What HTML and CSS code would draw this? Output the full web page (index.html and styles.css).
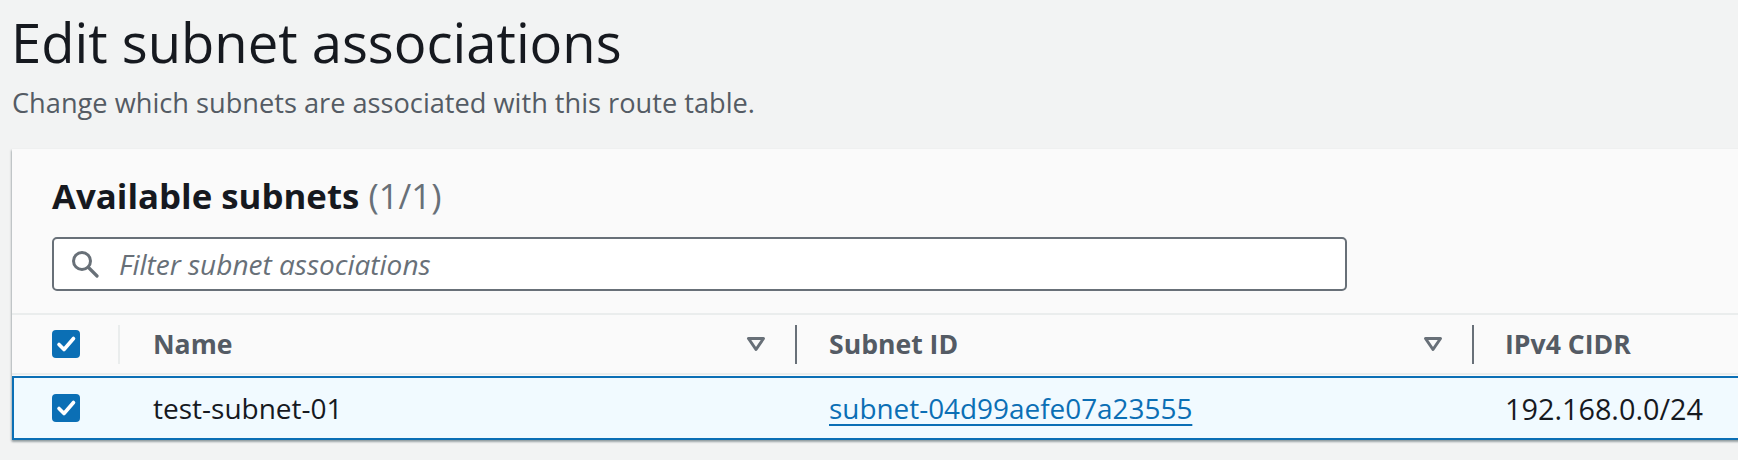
FILE: index.html
```html
<!DOCTYPE html>
<html lang="en">
<head>
<meta charset="utf-8">
<title>Edit subnet associations</title>
<link rel="stylesheet" href="styles.css">
</head>
<body>
<div class="page">
  <header class="page-header">
    <h1 class="title">Edit subnet associations</h1>
    <p class="desc">Change which subnets are associated with this route table.</p>
  </header>

  <section class="panel">
    <div class="panel-head">
      <h2 class="panel-title">Available subnets <span class="count">(1/1)</span></h2>
      <div class="filter">
        <svg class="search-icon" viewBox="0 0 28 28" width="28" height="28" aria-hidden="true">
          <circle cx="11" cy="11" r="8.5" fill="none" stroke="#687078" stroke-width="3"/>
          <line x1="17.5" y1="17.5" x2="26" y2="26" stroke="#687078" stroke-width="3.2" stroke-linecap="round"/>
        </svg>
        <span class="placeholder">Filter subnet associations</span>
      </div>
    </div>

    <div class="table">
      <div class="grid thead">
        <div class="cell cell-check">
          <svg class="checkbox" viewBox="0 0 28 28" width="28" height="28" aria-hidden="true">
            <rect x="0" y="0" width="28" height="28" rx="4" fill="#0b6fb5"/>
            <path d="M7 14.5 L12 19.5 L21.5 8.5" fill="none" stroke="#fff" stroke-width="3.6" stroke-linecap="round" stroke-linejoin="round"/>
          </svg>
          <span class="divider light"></span>
        </div>
        <div class="cell cell-name">
          <span class="th-label">Name</span>
          <svg class="caret" viewBox="0 0 20 16" width="20" height="16" aria-hidden="true">
            <polygon points="2.5,2.5 17.5,2.5 10,13.5" fill="none" stroke="#687078" stroke-width="3" stroke-linejoin="round"/>
          </svg>
          <span class="divider"></span>
        </div>
        <div class="cell cell-subnet">
          <span class="th-label">Subnet ID</span>
          <svg class="caret" viewBox="0 0 20 16" width="20" height="16" aria-hidden="true">
            <polygon points="2.5,2.5 17.5,2.5 10,13.5" fill="none" stroke="#687078" stroke-width="3" stroke-linejoin="round"/>
          </svg>
          <span class="divider"></span>
        </div>
        <div class="cell cell-cidr">
          <span class="th-label">IPv4 CIDR</span>
        </div>
      </div>

      <div class="grid trow selected">
        <div class="cell cell-check">
          <svg class="checkbox" viewBox="0 0 28 28" width="28" height="28" aria-hidden="true">
            <rect x="0" y="0" width="28" height="28" rx="4" fill="#0b6fb5"/>
            <path d="M7 14.5 L12 19.5 L21.5 8.5" fill="none" stroke="#fff" stroke-width="3.6" stroke-linecap="round" stroke-linejoin="round"/>
          </svg>
        </div>
        <div class="cell cell-name"><span class="td-text">test-subnet-01</span></div>
        <div class="cell cell-subnet"><a class="link" href="#">subnet-04d99aefe07a23555</a></div>
        <div class="cell cell-cidr"><span class="td-text td-num">192.168.0.0/24</span></div>
      </div>
    </div>
  </section>
</div>
</body>
</html>
```

FILE: styles.css
```css
* {
  box-sizing: border-box;
}

html, body {
  margin: 0;
  padding: 0;
  background: #f2f3f3;
  overflow: hidden;
}

body {
  font-family: "Open Sans", "Noto Sans", sans-serif;
  color: #16191f;
  width: 1738px;
  height: 460px;
}

.page {
  padding: 10px 0 0 12px;
}

.page-header {
  display: flex;
  flex-direction: column;
}

.title {
  margin: 0 0 0 -1px;
  font-size: 54.4px;
  font-weight: 400;
  line-height: 64px;
  color: #16191f;
}

.desc {
  margin: 9px 0 0 0;
  font-size: 27.2px;
  line-height: 40px;
  color: #545b64;
}

.panel {
  margin-top: 26px;
  width: 1800px;
  background: #fafafa;
  box-shadow: 0 2px 2px 0 rgba(0, 28, 36, 0.3), -1px 1px 2px 0 rgba(0, 28, 36, 0.18);
}

.panel-head {
  padding: 23px 0 22px 40px;
}

.panel-title {
  margin: 0;
  font-size: 34.8px;
  line-height: 48px;
  font-weight: 700;
  color: #16191f;
}

.count {
  font-weight: 400;
  color: #687078;
}

.filter {
  margin-top: 17px;
  width: 1295px;
  height: 54px;
  display: flex;
  align-items: center;
  background: #fff;
  border: 2px solid #687078;
  border-radius: 5px;
  padding-left: 17px;
}

.search-icon {
  flex: none;
  display: block;
}

.placeholder {
  margin-left: 20px;
  font-size: 28px;
  font-style: italic;
  color: #687078;
}

.table {
  border-top: 2px solid #eaeded;
}

.grid {
  display: grid;
  grid-template-columns: 108px 677px 677px 1fr;
}

.thead {
  height: 60px;
  border-bottom: 2px solid #eaeded;
  background: #fafafa;
}

.trow {
  margin-top: 1px;
  height: 64px;
}

.selected {
  background: #f1faff;
  box-shadow: inset 0 0 0 2px #0b6fb5;
}

.cell {
  display: flex;
  align-items: center;
  min-width: 0;
}

.cell-check {
  padding-left: 40px;
}

.cell-name {
  padding-left: 33px;
}

.cell-subnet {
  padding-left: 32px;
}

.cell-cidr {
  padding-left: 31px;
}

.checkbox {
  display: block;
  flex: none;
}

.divider {
  flex: none;
  width: 2px;
  height: 39px;
  background: #687078;
}

.divider.light {
  margin-left: auto;
  background: #eaeded;
}

.caret {
  display: block;
  flex: none;
  margin-left: auto;
  margin-right: 29px;
}

.th-label {
  font-size: 26.6px;
  font-weight: 700;
  color: #545b64;
}

.td-text {
  font-size: 28px;
  color: #16191f;
}

.td-num {
  font-size: 28.8px;
}

.link {
  font-size: 27.9px;
  color: #0b6fb5;
  text-decoration: underline;
  text-decoration-thickness: 2px;
  text-underline-offset: 5px;
}
```
